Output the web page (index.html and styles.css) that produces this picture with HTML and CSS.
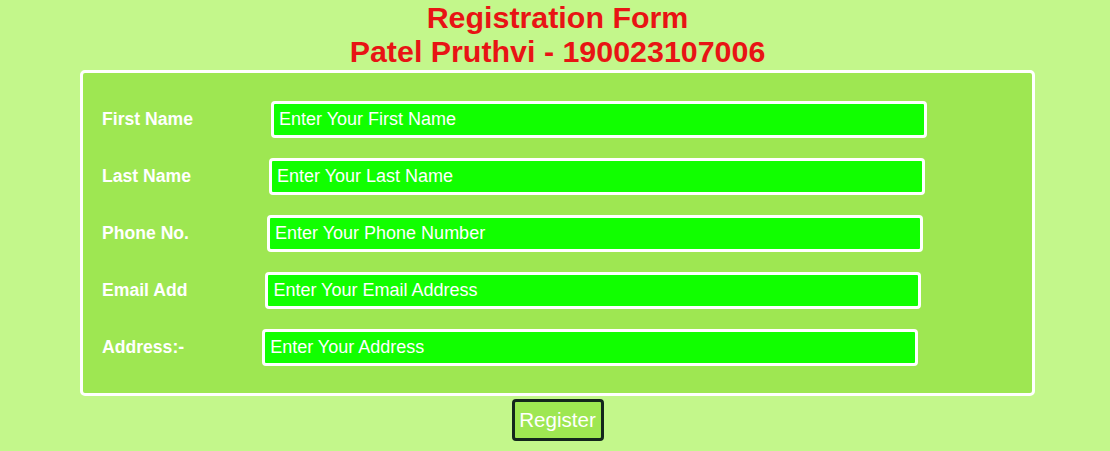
FILE: index.html
```html
<!DOCTYPE html>
<html>
<head>
<meta charset="utf-8">
<title>Registration Form</title>
<link rel="stylesheet" href="styles.css">
</head>
<body>
<h1 class="title">Registration Form<br>Patel Pruthvi - 190023107006</h1>
<form class="form">
  <div class="box">
    <div class="row"><label class="label">First Name</label><input class="field" type="text" placeholder="Enter Your First Name"></div>
    <div class="row"><label class="label">Last Name</label><input class="field" type="text" placeholder="Enter Your Last Name"></div>
    <div class="row"><label class="label">Phone No.</label><input class="field" type="text" placeholder="Enter Your Phone Number"></div>
    <div class="row"><label class="label">Email Add</label><input class="field" type="text" placeholder="Enter Your Email Address"></div>
    <div class="row"><label class="label">Address:-</label><input class="field" type="text" placeholder="Enter Your Address"></div>
  </div>
  <div class="actions"><button class="btn" type="button">Register</button></div>
</form>
</body>
</html>
```
FILE: styles.css
```css
html, body {
  margin: 0;
  padding: 0;
}
body {
  background: #c3f78b;
  font-family: "Liberation Sans", Arial, sans-serif;
  padding-left: 5px;
  height: 451px;
  overflow: hidden;
}
.title {
  margin: 0;
  text-align: center;
  color: #e81414;
  font-size: 30.4px;
  line-height: 34px;
  font-weight: bold;
}
.form {
  margin: 2px 0 0 0;
}
.box {
  width: 955px;
  box-sizing: border-box;
  margin: 0 auto;
  border: 3px solid #ffffff;
  border-radius: 5px;
  background: #9ee752;
  padding: 28px 19px 27px 19px;
  display: flex;
  flex-direction: column;
  gap: 20px;
}
.row {
  display: flex;
  align-items: center;
}
.label {
  color: #ffffff;
  font-weight: bold;
  font-size: 17.6px;
  margin-right: 78px;
}
.field {
  width: 656px;
  height: 37px;
  box-sizing: border-box;
  border: 3px solid #ffffff;
  border-radius: 4px;
  background: #11ff00;
  color: #ffffff;
  font-family: "Liberation Sans", Arial, sans-serif;
  font-size: 18px;
  padding: 0 5px;
  outline: none;
}
.field::placeholder {
  color: #ffffff;
  opacity: 1;
}
.actions {
  display: flex;
  justify-content: center;
  margin-top: 3px;
}
.btn {
  width: 92px;
  height: 42px;
  box-sizing: border-box;
  border: 3px solid #13261c;
  border-radius: 4px;
  background: #9ee752;
  color: #ffffff;
  font-family: "Liberation Sans", Arial, sans-serif;
  font-size: 20.6px;
  padding: 0;
}
```
